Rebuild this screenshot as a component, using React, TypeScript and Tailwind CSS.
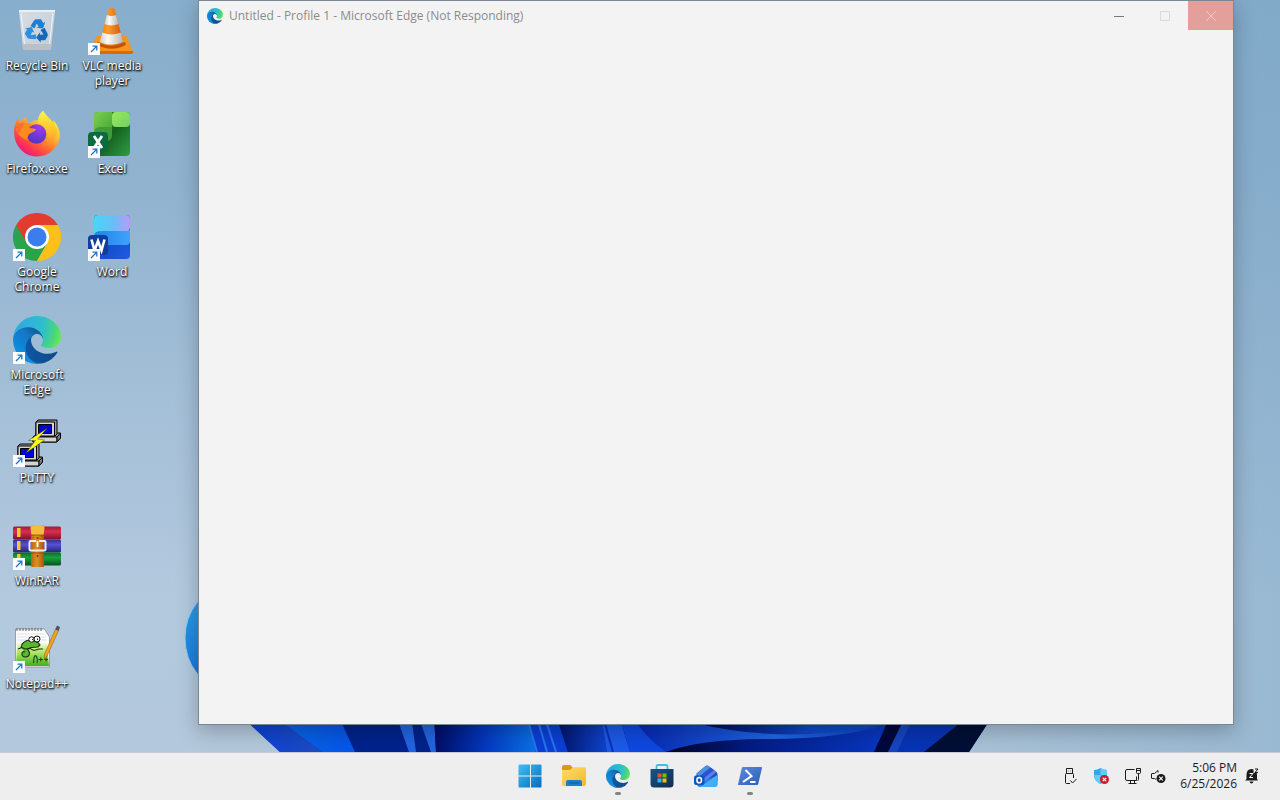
import React from 'react';

interface DesktopItem {
  name: string;
  icon: React.ReactNode;
  shortcut?: boolean;
}

interface IconProps {
  id: string;
  className: string;
}

const EdgeIcon: React.FC<IconProps> = ({ id, className }) => (
  <svg viewBox="0 0 256 256" className={className} aria-hidden="true">
    <defs>
      <linearGradient id={`${id}-a`} x1="60" y1="177" x2="241" y2="177" gradientUnits="userSpaceOnUse">
        <stop offset="0" stopColor="#0c59a4" />
        <stop offset="1" stopColor="#114a8b" />
      </linearGradient>
      <linearGradient id={`${id}-b`} x1="150" y1="100" x2="50" y2="220" gradientUnits="userSpaceOnUse">
        <stop offset="0" stopColor="#145c9c" />
        <stop offset="0.3" stopColor="#1478c2" />
        <stop offset="0.7" stopColor="#0e84d8" />
        <stop offset="1" stopColor="#1290dc" />
      </linearGradient>
      <radialGradient id={`${id}-c`} cx="30" cy="50" r="240" gradientUnits="userSpaceOnUse">
        <stop offset="0" stopColor="#2fa9dc" />
        <stop offset="0.3" stopColor="#2fb3dc" />
        <stop offset="0.6" stopColor="#2fc0c6" />
        <stop offset="0.85" stopColor="#4ad67a" />
        <stop offset="1" stopColor="#66eb4c" />
      </radialGradient>
    </defs>
    <g transform="translate(-4.63 -4.92)">
      <path fill={`url(#${id}-a)`} d="M235.68 195.46a93.73 93.73 0 0 1-10.54 4.71 101.87 101.87 0 0 1-35.9 6.46c-47.32 0-88.54-32.55-88.54-74.32A31.48 31.48 0 0 1 117.13 105c-42.8 1.8-53.8 46.4-53.8 72.53 0 73.88 68.09 81.37 82.76 81.37 7.91 0 19.84-2.3 27-4.56l1.31-.44a128.34 128.34 0 0 0 66.6-52.8 4 4 0 0 0-5.32-5.64z" />
      <path fill={`url(#${id}-b)`} d="M110.34 246.34A79.2 79.2 0 0 1 87.6 225a80.72 80.72 0 0 1 29.53-120c3.12-1.47 8.45-4.13 15.54-4a32.35 32.35 0 0 1 25.69 13 31.88 31.88 0 0 1 6.36 18.66c0-.21 24.46-79.6-80-79.6-43.9 0-80 41.66-80 78.21a130.15 130.15 0 0 0 12.11 56 128 128 0 0 0 156.38 67.11 75.55 75.55 0 0 1-62.78-8z" />
      <path fill={`url(#${id}-c)`} d="M156.94 153.78c-.81 1.05-3.3 2.5-3.3 5.66 0 2.61 1.7 5.12 4.72 7.23 14.38 10 41.49 8.68 41.56 8.68a59.56 59.56 0 0 0 30.27-8.35 61.38 61.38 0 0 0 30.43-52.88c.26-22.41-8-37.31-11.34-43.91C228.09 28.76 182.35 4.92 132.61 4.92a128 128 0 0 0-128 126.2c.48-36.54 36.8-66.05 80-66.05 3.5 0 23.46.34 42 10.07 16.34 8.58 24.9 18.94 30.85 29.21 6.18 10.67 7.28 24.15 7.28 29.52s-2.74 13.33-7.8 19.91z" />
    </g>
  </svg>
);

const RecycleBinIcon = () => (
  <svg viewBox="0 0 48 48" className="size-12" aria-hidden="true">
    <defs>
      <linearGradient id="bin" x1="0" y1="0" x2="1" y2="1">
        <stop offset="0" stopColor="#d6dde4" />
        <stop offset="1" stopColor="#c3ccd6" />
      </linearGradient>
    </defs>
    <path d="M6 4.500h36l-4 37q-.2 1.500-2 1.500H12q-1.800 0-2-1.500z" fill="url(#bin)" />
    <path d="M6 3h36v2H6z" fill="#eef1f3" />
    <path d="M9.500 37h29l-.6 4.500q-.2 1.500-2 1.500H12q-1.800 0-2-1.500z" fill="#b9c0c8" />
    <path d="M8 6l3.500 31M40 6l-3.500 31" stroke="#f1f4f7" strokeWidth="1" fill="none" />
    <g fill="#1b7fd6">
      <path id="recycle" d="M17.500 19l3.500-5.500q.8-1.200 2.500-1.200h4.500l2.200 3.800 2-1.100-2.200 6.500-6.500-.8 2.100-1.200-1.900-3-2.200 5z" />
      <use href="#recycle" transform="rotate(120 24 24)" fill="#1269bd" />
      <use href="#recycle" transform="rotate(240 24 24)" fill="#2b8fe4" />
    </g>
  </svg>
);

const VlcIcon = () => (
  <svg viewBox="0 0 48 48" className="size-12" aria-hidden="true">
    <defs>
      <linearGradient id="cone" x1="0" y1="0" x2="1" y2="0">
        <stop offset="0" stopColor="#e97d12" />
        <stop offset="0.35" stopColor="#ff9a2c" />
        <stop offset="1" stopColor="#c95304" />
      </linearGradient>
      <linearGradient id="band" x1="0" y1="0" x2="1" y2="0">
        <stop offset="0" stopColor="#cfcfcf" />
        <stop offset="0.35" stopColor="#fafafa" />
        <stop offset="1" stopColor="#b4b4b4" />
      </linearGradient>
    </defs>
    <path d="M10 29h27q2 0 2.500 2L44.500 44q.5 2-2 2H5q-2.500 0-2-2l4.500-13q.6-2 2.500-2z" fill="#f7941d" />
    <path d="M3 44h42l.2 1q0 2-2.200 2H4q-2 0-1.500-2z" fill="#d96b06" />
    <path d="M9.500 35q14 6 28 0v3q-14 7.500-28 0z" fill="#bf5405" />
    <path d="M20.500 2q3-2.500 6 0L35.500 36q-12 5.500-24 0z" fill="url(#cone)" />
    <path d="M18.900 8q4.600 2 9.200 0l2.400 9q-7 2.800-14 0z" fill="url(#band)" />
    <path d="M14.300 25.500q9.200 4 18.400 0l2.600 9.500q-11.800 5-23.600 0z" fill="url(#band)" />
  </svg>
);

const FirefoxIcon = () => (
  <svg viewBox="0 0 48 48" className="size-12" aria-hidden="true">
    <defs>
      <linearGradient id="fox" x1="38" y1="6" x2="10" y2="44" gradientUnits="userSpaceOnUse">
        <stop offset="0" stopColor="#fff44f" />
        <stop offset="0.3" stopColor="#ffbd2e" />
        <stop offset="0.55" stopColor="#ff7a2a" />
        <stop offset="0.8" stopColor="#ff3750" />
        <stop offset="1" stopColor="#e31587" />
      </linearGradient>
      <linearGradient id="fox-tail" x1="34" y1="2" x2="36" y2="40" gradientUnits="userSpaceOnUse">
        <stop offset="0" stopColor="#fff04a" />
        <stop offset="0.5" stopColor="#ffc22c" />
        <stop offset="1" stopColor="#ff7139" stopOpacity="0" />
      </linearGradient>
      <radialGradient id="globe" cx="0.7" cy="0.15" r="0.95">
        <stop offset="0" stopColor="#a03cf0" />
        <stop offset="0.5" stopColor="#7139d8" />
        <stop offset="1" stopColor="#4f37b4" />
      </radialGradient>
    </defs>
    <path d="M44.500 16.500c-1-2.600-3.200-5.300-4.900-6.200 1.400 2.700 2.200 5.500 2.500 7.500-2.800-7-7.500-9.800-11.300-15.900L30 .8c-2.800 2.300-4.500 6.100-4.900 9.300-3.300.2-6.500 1.400-9.100 3.500-2.600-2-2.700-5.800-2.500-6.700-3.100 1.400-5.400 3.700-7 5.500-.8-1-1-3.600-.9-5.200C2.900 10.600.9 17 1.200 22.500c0 13.500 10 24 22.900 24 11.600 0 21.200-8.400 22.600-19.400.5-3.600-.7-7.800-2.200-10.600z" fill="url(#fox)" />
    <path d="M30 .8c-3.600 3-5.600 8.200-4.600 12.500 7 2.200 10.700 9.500 8.200 16.600-1.500 4-4.500 6.500-8 7.500 9 1 18-6 18.500-16.500-1.200-8.300-8.300-12.300-13.300-19z" fill="url(#fox-tail)" />
    <circle cx="23.500" cy="24" r="9.800" fill="url(#globe)" />
    <path d="M3 17c2-3 6-4.500 9-3.500 3-.8 5 0 6.500 1.300-1.500 1-2 2.200-2 3.200 2.300.2 5 .5 6.500 1.200-.5 2.300-3.500 2.800-6 4.200-1.500 1-3 3-2.500 6.500C8.500 29 3.500 23 3 17z" fill="#ff8b20" />
    <path d="M3 17c2-3 6-4.500 9-3.500-2 1.500-4 3.500-4.500 7L6 24c-1.800-2-2.800-4.500-3-7z" fill="#ff6a34" />
  </svg>
);

const ExcelIcon = () => (
  <svg viewBox="0 0 48 48" className="size-12" aria-hidden="true">
    <defs>
      <linearGradient id="xl-body" x1="0" y1="0" x2="1" y2="1">
        <stop offset="0" stopColor="#2f9a3a" />
        <stop offset="0.5" stopColor="#15611f" />
        <stop offset="1" stopColor="#2f9e44" />
      </linearGradient>
      <linearGradient id="xl-top" x1="0" y1="0" x2="1" y2="1">
        <stop offset="0" stopColor="#7bd04e" />
        <stop offset="1" stopColor="#46a537" />
      </linearGradient>
      <linearGradient id="xl-tile" x1="0" y1="0" x2="1" y2="1">
        <stop offset="0" stopColor="#9ae85a" />
        <stop offset="1" stopColor="#74d166" />
      </linearGradient>
    </defs>
    <rect x="6" y="2" width="36" height="44" rx="4" fill="url(#xl-body)" />
    <path d="M6 14h18v11q0 6-6 6H6z" fill="#3f9c3a" />
    <path d="M10 2h14v15H12q-6 0-6 6V6q0-4 4-4z" fill="url(#xl-top)" />
    <rect x="24" y="2" width="18" height="15" rx="4" fill="url(#xl-tile)" />
    <rect x="0" y="22" width="20" height="20" rx="4" fill="#0b6b3f" />
    <path d="M6 26l8 12M14 26L6 38" stroke="#fff" strokeWidth="2.800" />
  </svg>
);

const WordIcon = () => (
  <svg viewBox="0 0 48 48" className="size-12" aria-hidden="true">
    <defs>
      <linearGradient id="wd-top" x1="0" y1="0" x2="1" y2="0">
        <stop offset="0" stopColor="#46d7f7" />
        <stop offset="0.55" stopColor="#6cbcf7" />
        <stop offset="1" stopColor="#b79cf5" />
      </linearGradient>
      <linearGradient id="wd-mid" x1="0" y1="0" x2="1" y2="0">
        <stop offset="0" stopColor="#1f83e8" />
        <stop offset="1" stopColor="#3fa2fb" />
      </linearGradient>
      <linearGradient id="wd-low" x1="0" y1="0" x2="1" y2="1">
        <stop offset="0" stopColor="#0f3fb5" />
        <stop offset="1" stopColor="#1d5be0" />
      </linearGradient>
    </defs>
    <rect x="6" y="2" width="36" height="44" rx="4" fill="url(#wd-low)" />
    <path d="M6 17h36v11q0 4-4 4H10q-4 0-4-3z" fill="url(#wd-mid)" />
    <path d="M10 2h28q4 0 4 4v8q0 4-4 4H14q-8 0-8 5V6q0-4 4-4z" fill="url(#wd-top)" />
    <rect x="0" y="22" width="20" height="20" rx="4" fill="#133d9c" />
    <path d="M3.500 26.500l3 11L10 28l3.500 9.500 3-11" fill="none" stroke="#fff" strokeWidth="2.600" />
  </svg>
);

const ChromeIcon = () => (
  <svg viewBox="0 0 48 48" className="size-12" aria-hidden="true">
    <path d="M24 24L3.200 12A24 24 0 0 0 24 48l10.400-18z" fill="#2ba24c" />
    <path d="M24 24l10.400 6L24 48A24 24 0 0 0 44.800 12H24z" fill="#fcc016" />
    <path d="M24 12h20.800A24 24 0 0 0 3.200 12l10.400 18L24 24z" fill="#e33b2e" />
    <circle cx="24" cy="24" r="12" fill="#fff" />
    <circle cx="24" cy="24" r="9.500" fill="#3b7ded" />
  </svg>
);

const PuttyIcon = () => (
  <svg viewBox="0 0 48 48" className="size-12" aria-hidden="true">
    <g id="putty-pc" stroke="#000" strokeLinejoin="round">
      <path d="M20 18l5-4h22.500v5l-4 4H20z" fill="#9c9c9c" />
      <path d="M20 18h24v5H20z" fill="#d4d4d4" />
      <path d="M44 18l3.500-4v5l-3.500 4z" fill="#7d7d7d" />
      <path d="M23 3l2-2h19v14l-2 2H23z" fill="#9c9c9c" />
      <path d="M23 3h18.500v14H23z" fill="#d4d4d4" />
      <path d="M25.500 5.500h13v9h-13z" fill="#0000d8" />
    </g>
    <use href="#putty-pc" x="-18" y="24" />
    <path d="M34 9.500L15.500 21.500h7L13 34 31.500 21l-7-1z" fill="#ff0" stroke="#444" strokeWidth=".5" />
  </svg>
);

const WinrarIcon = () => (
  <svg viewBox="0 0 48 48" className="size-12" aria-hidden="true">
    <defs>
      <linearGradient id="rar-red" x1="0" y1="0" x2="0" y2="1">
        <stop offset="0" stopColor="#a01c3a" />
        <stop offset="0.4" stopColor="#d8304f" />
        <stop offset="1" stopColor="#7c1029" />
      </linearGradient>
      <linearGradient id="rar-blue" x1="0" y1="0" x2="0" y2="1">
        <stop offset="0" stopColor="#33308a" />
        <stop offset="0.4" stopColor="#5452d6" />
        <stop offset="1" stopColor="#26246c" />
      </linearGradient>
      <linearGradient id="rar-green" x1="0" y1="0" x2="0" y2="1">
        <stop offset="0" stopColor="#0b6b2a" />
        <stop offset="0.4" stopColor="#17a23e" />
        <stop offset="1" stopColor="#07521d" />
      </linearGradient>
      <linearGradient id="strap" x1="0" y1="0" x2="1" y2="0">
        <stop offset="0" stopColor="#b8650d" />
        <stop offset="0.45" stopColor="#e0902a" />
        <stop offset="1" stopColor="#a65508" />
      </linearGradient>
    </defs>
    <rect y="4.500" width="48" height="13" rx="1.500" fill="url(#rar-red)" />
    <rect y="17.500" width="48" height="13" rx="1.500" fill="url(#rar-blue)" />
    <rect y="30.500" width="48" height="13" rx="1.500" fill="url(#rar-green)" />
    <path d="M4 6h3.500v9H4zM4 19h3.500v9H4zM4 32h3.500v6H4z" fill="#f4c92c" />
    <path d="M18 5q0-2 2-2h9q2 0 2 2v39q0 1-1 1H19q-1 0-1-1z" fill="url(#strap)" />
    <path d="M17.500 6q0-3 3-3h8q3 0 3 3l-1 7h-12z" fill="#f2bd3a" />
    <path d="M18 13h13M18 31h13" stroke="#8c4808" strokeWidth=".8" />
    <path d="M23 19h-5.500q-1 0-1 1v7.500q0 1 1 1h14q1 0 1-1V20q0-1-1-1H26" fill="none" stroke="#ececec" strokeWidth="2" />
    <path d="M24.500 19v6" stroke="#fff" strokeWidth="1.800" />
    <circle cx="24.500" cy="16" r="1" fill="#6e3404" />
    <circle cx="24.500" cy="34" r="1" fill="#6e3404" />
  </svg>
);

const NotepadPlusIcon = () => (
  <svg viewBox="0 0 48 48" className="size-12" aria-hidden="true">
    <defs>
      <linearGradient id="npp" x1="0" y1="0" x2="0" y2="1">
        <stop offset="0" stopColor="#f4fbdc" />
        <stop offset="0.45" stopColor="#a6e35a" />
        <stop offset="1" stopColor="#3fae24" />
      </linearGradient>
    </defs>
    <path d="M2.500 4h29l5 8v30h-34z" fill="#fdfdfd" stroke="#8a8a8a" strokeWidth=".8" />
    <path d="M4 9h27M4 12h29M4 15h30" stroke="#c8d4dc" strokeWidth=".6" />
    <path d="M4 18h30l2 23H3z" fill="url(#npp)" />
    <path d="M4 6V3M7 6V3M10 6V3M13 6V3M16 6V3M19 6V3M22 6V3M25 6V3M28 6V3" stroke="#666" strokeWidth="1" />
    <path d="M8 23q0-5 6-7.500l5-.5 6 2.500 2 2.500-2 2-7 .5-3.500 1.500 2 3.500q0 4.500-4 4.500t-3.500-4q1-2 3-1" fill="#55bb2b" stroke="#1d2a18" strokeWidth="1.100" />
    <circle cx="18.500" cy="14.500" r="2.700" fill="#fff" stroke="#111" strokeWidth="1" />
    <circle cx="24" cy="14" r="3" fill="#fff" stroke="#111" strokeWidth="1" />
    <path d="M19 14.500h1M24.500 13.500v1.500M5 24l4-1.500 3 1.500 5-.5 4 2 5-1.500h4" stroke="#1d2a18" strokeWidth="1.100" fill="none" />
    <path d="M20.500 38q.5-9 2.500-7t1 7M25.500 34.500h4.500M27.800 32.500v4M31 34.500h4M33 32.500v4" stroke="#1e4a12" strokeWidth="1.100" fill="none" />
    <path d="M43 3l3 1.500L34.500 30l-3 4.500V29z" fill="#f3a41c" stroke="#9b6310" strokeWidth=".6" />
    <path d="M44 .5l3 1.500-1.500 4-3-1.500z" fill="#4a4e70" />
  </svg>
);

const ShortcutArrow = () => (
  <svg viewBox="0 0 12 12" className="absolute bottom-0 left-0 size-3" aria-hidden="true">
    <path d="M0 0h12v12H0z" fill="#fdfdfe" />
    <path d="M3 9l5-5M4.500 3.200H8.800V7.500" fill="none" stroke="#2176c7" strokeWidth="1.300" />
  </svg>
);

// The icons flow down the first column before starting the second one
const desktopItems: DesktopItem[] = [
  { name: 'Recycle Bin', icon: <RecycleBinIcon /> },
  { name: 'Firefox.exe', icon: <FirefoxIcon /> },
  { name: 'Google Chrome', icon: <ChromeIcon />, shortcut: true },
  { name: 'Microsoft Edge', icon: <EdgeIcon id="edge-desktop" className="size-12" />, shortcut: true },
  { name: 'PuTTY', icon: <PuttyIcon />, shortcut: true },
  { name: 'WinRAR', icon: <WinrarIcon />, shortcut: true },
  { name: 'Notepad++', icon: <NotepadPlusIcon />, shortcut: true },
  { name: 'VLC media player', icon: <VlcIcon />, shortcut: true },
  { name: 'Excel', icon: <ExcelIcon />, shortcut: true },
  { name: 'Word', icon: <WordIcon />, shortcut: true },
];

const DesktopIcon: React.FC<DesktopItem> = ({ name, icon, shortcut }) => (
  <button type="button" className="flex flex-col items-center gap-[3px] px-1 pt-[7px]">
    <span className="relative block size-12">
      {icon}
      {shortcut && <ShortcutArrow />}
    </span>
    <span className="text-xs leading-[15px] text-white [text-shadow:1px_1px_2px_#000,0_1px_2px_#000]">{name}</span>
  </button>
);

const Wallpaper = () => (
  <svg
    viewBox="0 0 1280 752"
    preserveAspectRatio="xMidYMax slice"
    className="absolute inset-0 h-full w-full"
    aria-hidden="true"
  >
    <defs>
      <linearGradient id="sky" x1="0" y1="0" x2="0" y2="1">
        <stop offset="0" stopColor="#87aecc" />
        <stop offset="0.25" stopColor="#91b3d0" />
        <stop offset="0.55" stopColor="#a5c0d8" />
        <stop offset="0.8" stopColor="#b3c9de" />
        <stop offset="1" stopColor="#b3c8db" />
      </linearGradient>
      <linearGradient id="sky-right" x1="0" y1="0" x2="1" y2="0">
        <stop offset="0.6" stopColor="#79a5c5" stopOpacity="0" />
        <stop offset="1" stopColor="#79a5c5" stopOpacity="0.45" />
      </linearGradient>
      <linearGradient id="petal" x1="0" y1="0" x2="0" y2="1">
        <stop offset="0" stopColor="#2ba4ea" />
        <stop offset="1" stopColor="#1673dc" />
      </linearGradient>
      <linearGradient id="fold-1" x1="0" y1="0" x2="1" y2="0">
        <stop offset="0" stopColor="#0a3fd8" />
        <stop offset="1" stopColor="#1e4cc0" />
      </linearGradient>
      <linearGradient id="fold-2" x1="0" y1="0" x2="1" y2="0">
        <stop offset="0" stopColor="#0a66e0" />
        <stop offset="1" stopColor="#0455ea" />
      </linearGradient>
      <linearGradient id="fold-3" x1="0" y1="0" x2="1" y2="0">
        <stop offset="0" stopColor="#000c62" />
        <stop offset="0.5" stopColor="#0438c0" />
        <stop offset="1" stopColor="#0a72e6" />
      </linearGradient>
      <linearGradient id="fold-4" x1="0" y1="0" x2="1" y2="0">
        <stop offset="0" stopColor="#001266" />
        <stop offset="1" stopColor="#0f44cf" />
      </linearGradient>
      <linearGradient id="fold-5" x1="0" y1="0" x2="1" y2="0">
        <stop offset="0" stopColor="#0626b0" />
        <stop offset="0.55" stopColor="#1f68e4" />
        <stop offset="1" stopColor="#0b35b8" />
      </linearGradient>
      <linearGradient id="fold-6" x1="0" y1="0" x2="1" y2="0">
        <stop offset="0" stopColor="#000428" />
        <stop offset="0.35" stopColor="#031a80" />
        <stop offset="1" stopColor="#0838c4" />
      </linearGradient>
      <linearGradient id="fold-7" x1="0" y1="0" x2="1" y2="0">
        <stop offset="0" stopColor="#00062c" />
        <stop offset="0.25" stopColor="#042088" />
        <stop offset="0.6" stopColor="#1048c8" />
        <stop offset="1" stopColor="#0d49c4" />
      </linearGradient>
    </defs>
    <rect width="1280" height="752" fill="url(#sky)" />
    <rect width="1280" height="752" fill="url(#sky-right)" />
    <ellipse cx="226" cy="638" rx="41" ry="50" fill="url(#petal)" stroke="#8fcbf0" strokeWidth="1" />
    <path d="M240 715L280 752H969L993 715z" fill="#00228c" />
    <path d="M240 715L280 752H322L272 715z" fill="url(#fold-1)" />
    <path d="M272 715L322 752H355L338 715z" fill="url(#fold-2)" />
    <path d="M396 715L409 752H416L411 715zM418 715L431 752H436L434 715z" fill="#2264e0" />
    <path d="M434 715L436 752H536L527 715z" fill="url(#fold-3)" />
    <path d="M527 715L536 752H568L556 715z" fill="#0b3fd4" />
    <path d="M529 724L537 752M539 724L547 752M547 724L556 752" stroke="#2a72f0" strokeWidth="2" />
    <path d="M556 715L568 752H607L601 715z" fill="url(#fold-4)" />
    <path d="M601 715L607 752H630L619 715z" fill="#1c5ae8" />
    <path d="M605 724L613 752" stroke="#0a30b8" strokeWidth="2" />
    <path d="M619 715L630 752H666L632 715z" fill="#0f48e0" />
    <path d="M632 715Q645 738 666 752H880L895 715z" fill="url(#fold-5)" />
    <path d="M666 752Q700 739 770 739T890 724L876 752z" fill="url(#fold-6)" />
    <path d="M695 723Q790 746 888 723z" fill="url(#fold-7)" />
    <path d="M887 723L874 752H896L908 723z" fill="#00083c" />
    <path d="M902 723L888 752H898L911 723z" fill="#1745c0" />
    <path d="M911 723L897 752H924L960 723z" fill="#0734b4" />
    <path d="M960 723L924 752H969L988 723z" fill="#000f36" />
  </svg>
);

const EdgeWindow = () => (
  <section className="absolute top-0 right-[46px] bottom-[27px] left-[198px] flex flex-col border border-[#7c8794] bg-[#f3f3f3] shadow-[0_6px_20px_rgba(0,0,0,0.25)]">
    <header className="flex items-start justify-between">
      <div className="flex items-center gap-1.5 pt-1.5 pl-2">
        <EdgeIcon id="edge-window" className="size-4" />
        <h1 className="text-xs leading-[18px] text-[#8b8b8b]">Untitled - Profile 1 - Microsoft Edge (Not Responding)</h1>
      </div>
      <div className="flex">
        <button type="button" aria-label="Minimize" className="grid h-[29px] w-[46px] place-items-center text-[#6f7a84]">
          <svg viewBox="0 0 10 10" className="size-2.5"><path d="M0 5.500h10" stroke="currentColor" /></svg>
        </button>
        <button type="button" aria-label="Maximize" className="grid h-[29px] w-[46px] place-items-center text-[#d9d9d9]">
          <svg viewBox="0 0 10 10" className="size-2.5"><path d="M.5.5h9v9h-9z" fill="none" stroke="currentColor" /></svg>
        </button>
        <button type="button" aria-label="Close" className="grid h-[29px] w-[45px] place-items-center bg-[#e3a09b] text-[#efcac7]">
          <svg viewBox="0 0 10 10" className="size-2.5"><path d="M0 0l10 10M10 0L0 10" stroke="currentColor" /></svg>
        </button>
      </div>
    </header>
  </section>
);

const StartIcon = () => (
  <svg viewBox="0 0 24 24" className="size-6" aria-hidden="true">
    <defs>
      <linearGradient id="start" x1="0" y1="0" x2="24" y2="24" gradientUnits="userSpaceOnUse">
        <stop offset="0" stopColor="#3fc3f5" />
        <stop offset="1" stopColor="#0669c0" />
      </linearGradient>
    </defs>
    <path d="M1.500.5H12v11H.5v-10q0-1 1-1zM13 .5h9.500q1 0 1 1v10H13zM.5 12.500H12v11H1.500q-1 0-1-1zM13 12.500h10.500v10q0 1-1 1H13z" fill="url(#start)" />
  </svg>
);

const ExplorerIcon = () => (
  <svg viewBox="0 0 24 24" className="size-6" aria-hidden="true">
    <defs>
      <linearGradient id="folder" x1="0" y1="0" x2="1" y2="1">
        <stop offset="0" stopColor="#ffdc69" />
        <stop offset="1" stopColor="#f5b82b" />
      </linearGradient>
    </defs>
    <path d="M0 3q0-2 2-2h5.500q1 0 1.600.7L11 4v4H0z" fill="#d79a12" />
    <path d="M0 6h7q1 0 1.700-.8L10 4q.6-.8 1.600-.8H22q2 0 2 2V20q0 2-2 2H2q-2 0-2-2z" fill="url(#folder)" />
    <path d="M4 22v-4q0-2 2-2h12q2 0 2 2v4z" fill="#1b7fc7" />
    <path d="M6.500 19h11" stroke="#0d5c9c" />
  </svg>
);

const StoreIcon = () => (
  <svg viewBox="0 0 24 24" className="size-6" aria-hidden="true">
    <defs>
      <linearGradient id="store" x1="0" y1="0" x2="1" y2="1">
        <stop offset="0" stopColor="#17578a" />
        <stop offset="1" stopColor="#122b4d" />
      </linearGradient>
    </defs>
    <path d="M6.500 6V2.500q0-1.500 1.500-1.500h8q1.500 0 1.500 1.500V6" fill="none" stroke="#48b9e9" strokeWidth="1.800" />
    <path d="M.5 5h23v15q0 3.500-3.500 3.500H4Q.5 23.500.5 20z" fill="url(#store)" />
    <path d="M7.500 9.500h4v4h-4z" fill="#f25022" />
    <path d="M12.500 9.500h4v4h-4z" fill="#7fba00" />
    <path d="M7.500 14.500h4v4h-4z" fill="#35b5f0" />
    <path d="M12.500 14.500h4v4h-4z" fill="#ffb900" />
  </svg>
);

const OutlookIcon = () => (
  <svg viewBox="0 0 24 24" className="size-6" aria-hidden="true">
    <defs>
      <linearGradient id="mail" x1="0" y1="0" x2="1" y2="1">
        <stop offset="0" stopColor="#3ba3ee" />
        <stop offset="1" stopColor="#2a62dc" />
      </linearGradient>
    </defs>
    <path d="M2.500 9.500L11.500 2q1.500-1 3 0l8 6q1 1 1 2.500V17H2.500z" fill="#2350b8" />
    <path d="M2.500 9.500L11.500 2q1.500-1 3 0l2 1.500L5 13z" fill="#4c8fe6" />
    <path d="M5 13L16.500 3.500l3.500 2.600L9 15z" fill="#2a55d0" />
    <path d="M9 15L20 6.100l2.500 1.900L12 17z" fill="#5b7ff0" />
    <path d="M3 12l9.500 4.500L23.500 11v9q0 3-3 3H6q-3 0-3-3z" fill="url(#mail)" />
    <path d="M6 23L23.500 11v9q0 3-3 3z" fill="#49c3f5" opacity=".75" />
    <rect y="11.500" width="10.500" height="9.500" rx="2" fill="#1556b5" />
    <ellipse cx="5.200" cy="16.200" rx="2.300" ry="2.600" fill="none" stroke="#fff" strokeWidth="1.500" />
  </svg>
);

const PowerShellIcon = () => (
  <svg viewBox="0 0 24 24" className="size-6" aria-hidden="true">
    <defs>
      <linearGradient id="shell" x1="0" y1="0" x2="1" y2="1">
        <stop offset="0" stopColor="#5b8be0" />
        <stop offset="1" stopColor="#2c5cb4" />
      </linearGradient>
    </defs>
    <path d="M5 3h18.300q.9 0 .7 1L20.200 20q-.2 1-1.200 1H.8q-1 0-.7-1L3.800 4Q4 3 5 3z" fill="url(#shell)" />
    <path d="M7.500 6l6 6L5 18M12 18h5.500" fill="none" stroke="#fff" strokeWidth="2" />
  </svg>
);

const taskbarItems = [
  { name: 'Start', icon: <StartIcon />, running: false },
  { name: 'File Explorer', icon: <ExplorerIcon />, running: false },
  { name: 'Edge', icon: <EdgeIcon id="edge-taskbar" className="size-6" />, running: true },
  { name: 'Store', icon: <StoreIcon />, running: false },
  { name: 'Outlook', icon: <OutlookIcon />, running: false },
  { name: 'PowerShell', icon: <PowerShellIcon />, running: true },
];

const UsbIcon = () => (
  <svg viewBox="0 0 16 18" className="h-[18px] w-4" fill="none" stroke="#1b1b1b" aria-hidden="true">
    <path d="M4.500 6.500v-5h6v5M6.500 4h.5M8.500 4h.5" />
    <path d="M8 16.500H4.500q-1 0-1-1v-8q0-1 1-1h6q1 0 1 1V11M8.500 13.500l2 2.500 4-4" />
  </svg>
);

const ShieldIcon = () => (
  <svg viewBox="0 0 16 18" className="h-[18px] w-4" aria-hidden="true">
    <path d="M7.500 1q3 2 6.500 2v5q0 6-6.500 9Q1 14 1 8V3q3.500 0 6.500-2z" fill="#2fa8ea" />
    <path d="M7.500 1q3 2 6.500 2v5H7.500zM7.500 8v9Q1.500 14 1 8z" fill="#62cbfa" />
    <circle cx="11.500" cy="12.500" r="4.500" fill="#cf1b2d" />
    <path d="M9.800 10.800l3.400 3.400M13.200 10.800l-3.400 3.400" stroke="#fff" strokeWidth="1.200" />
  </svg>
);

const NetworkIcon = () => (
  <svg viewBox="0 0 18 18" className="size-[18px]" fill="none" stroke="#1b1b1b" aria-hidden="true">
    <path d="M10.500 2.500H3q-1.500 0-1.500 1.500v8q0 1.500 1.500 1.500h9.500v-4M6.500 13.500v2.500M10.500 13.500v2.500M4.500 16.500h8" />
    <path d="M12.500 1.500h4v4q0 1-1 1h-2q-1 0-1-1zM14.500 6.500v6q0 1-1 1M12.500 3.500h4" />
  </svg>
);

const VolumeIcon = () => (
  <svg viewBox="0 0 16 18" className="h-[18px] w-4" aria-hidden="true">
    <path d="M8 5.500v-2L4.500 6.500H2q-.5 0-.5.500v4q0 .5.500.5h2.500l1.500 1" fill="none" stroke="#1b1b1b" />
    <circle cx="11" cy="11.500" r="4.500" fill="#1b1b1b" />
    <path d="M9.200 9.700l3.600 3.600M12.800 9.700l-3.600 3.600" stroke="#fff" strokeWidth="1.200" />
  </svg>
);

const BellIcon = () => (
  <svg viewBox="0 0 16 18" className="h-[18px] w-4" aria-hidden="true">
    <path d="M2.500 12V8q0-6 5-6 5.500 0 5.500 6v4l1 1.500H1zM5.500 14.500h4q-.5 2-2 2t-2-2z" fill="#1b1b1b" />
    <path d="M9.500 1h6v5h-6z" fill="#eee" />
    <path d="M11 2h3l-3 3.500h3" fill="none" stroke="#1b1b1b" />
    <path d="M5.500 6.500h3.500l-3.500 4h3.500" fill="none" stroke="#fff" strokeWidth="1" />
  </svg>
);

const Taskbar = () => (
  <footer className="relative z-10 grid h-12 shrink-0 grid-cols-[1fr_auto_1fr] bg-[#eeeeee] shadow-[inset_0_1px_#c9cdd2]">
    <nav className="col-start-2 flex">
      {taskbarItems.map((item) => (
        <button key={item.name} type="button" aria-label={item.name} className="relative grid w-11 place-items-center">
          {item.icon}
          {item.running && <span className="absolute bottom-[5px] left-[19px] h-[3px] w-1.5 rounded-full bg-[#848484]" />}
        </button>
      ))}
    </nav>
    <div className="flex items-center justify-end pr-5">
      <button type="button" aria-label="Safely remove hardware" className="mr-[15px]"><UsbIcon /></button>
      <button type="button" aria-label="Security" className="mr-[15px]"><ShieldIcon /></button>
      <button type="button" aria-label="Network" className="mr-2"><NetworkIcon /></button>
      <button type="button" aria-label="Volume" className="mr-3.5"><VolumeIcon /></button>
      <button type="button" className="mr-[7px] text-right text-xs leading-4 text-[#1b1b1b]">
        <time className="block">5:06 PM</time>
        <time className="block">6/25/2026</time>
      </button>
      <button type="button" aria-label="Notifications"><BellIcon /></button>
    </div>
  </footer>
);

const App: React.FC = () => {
  return (
    <div className="flex h-screen flex-col overflow-hidden font-['Open_Sans','Noto_Sans',sans-serif]">
      <main className="relative min-h-0 flex-1">
        <Wallpaper />
        <div className="relative grid w-max auto-cols-[74px] grid-flow-col grid-rows-[repeat(7,103px)] gap-x-px">
          {desktopItems.map((item) => (
            <DesktopIcon key={item.name} {...item} />
          ))}
        </div>
        <EdgeWindow />
      </main>
      <Taskbar />
    </div>
  );
};

export default App;
